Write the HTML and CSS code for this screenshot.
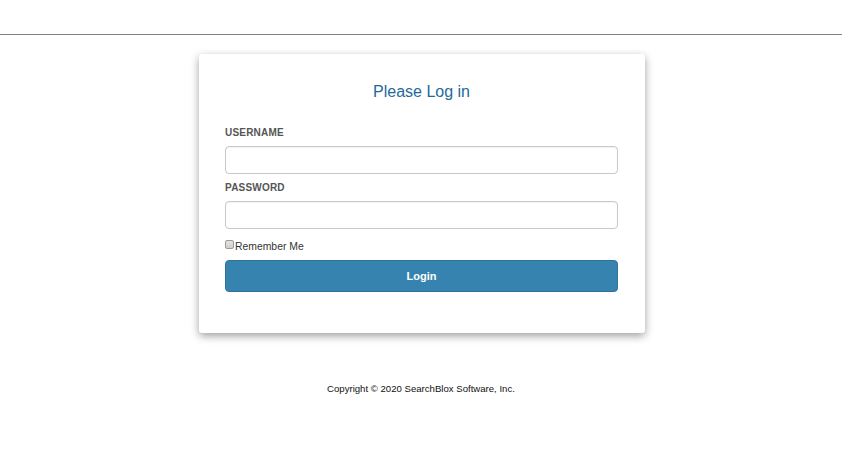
FILE: index.html
```html
<!DOCTYPE html>
<html>
<head>
<meta charset="utf-8">
<link rel="stylesheet" href="styles.css">
</head>
<body>
<div class="topbar"></div>
<div class="card">
  <h1 class="title">Please Log in</h1>
  <form class="form">
    <label class="label">USERNAME</label>
    <input class="input" type="text">
    <label class="label">PASSWORD</label>
    <input class="input" type="password">
    <div class="remember"><input type="checkbox" class="check"><span>Remember Me</span></div>
    <button type="button" class="btn">Login</button>
  </form>
</div>
<div class="footer">Copyright © 2020 SearchBlox Software, Inc.</div>
</body>
</html>
```
FILE: styles.css
```css
* { box-sizing: border-box; }
body {
  margin: 0;
  font-family: "Liberation Sans", Arial, sans-serif;
  background: #fff;
  color: #333;
}
.topbar {
  height: 35px;
  border-bottom: 1px solid #808080;
}
.card {
  width: 446px;
  height: 279px;
  margin: 19px 0 0 calc(50% - 222px);
  background: #fff;
  border-radius: 3px;
  box-shadow: 0 3px 9px rgba(0,0,0,0.38);
  padding: 27px 27px 0 26px;
}
.title {
  margin: 0;
  font-size: 16px;
  font-weight: normal;
  line-height: 22px;
  color: #1f6a99;
  text-align: center;
}
.form {
  display: flex;
  flex-direction: column;
  margin-top: 22px;
}
.label {
  font-size: 10px;
  font-weight: bold;
  line-height: 14px;
  color: #555;
  letter-spacing: 0.2px;
  padding-top: 1px;
  margin-bottom: 6px;
}
.input {
  height: 28px;
  border: 1px solid #c8c8c8;
  border-radius: 4px;
  margin: 0 0 6px;
  box-shadow: inset 0 1px 1px rgba(0,0,0,0.05);
}
.remember {
  display: flex;
  align-items: center;
  height: 16px;
  margin-top: 3px;
  font-size: 10.4px;
  color: #333;
}
.check {
  appearance: none;
  -webkit-appearance: none;
  width: 9px;
  height: 9px;
  margin: -3px 1px 0 0;
  border: 1px solid #9a9a9a;
  border-radius: 2px;
  background: linear-gradient(#e4e4e4, #cfcfcf);
}
.btn {
  margin-top: 6px;
  height: 32px;
  background: #3783b0;
  border: 1px solid #2f739d;
  border-radius: 4px;
  color: #fff;
  font-family: "Liberation Sans", Arial, sans-serif;
  font-weight: bold;
  font-size: 11px;
}
.footer {
  margin-top: 49px;
  text-align: center;
  font-size: 9.6px;
  line-height: 14px;
  color: #111;
}
```
